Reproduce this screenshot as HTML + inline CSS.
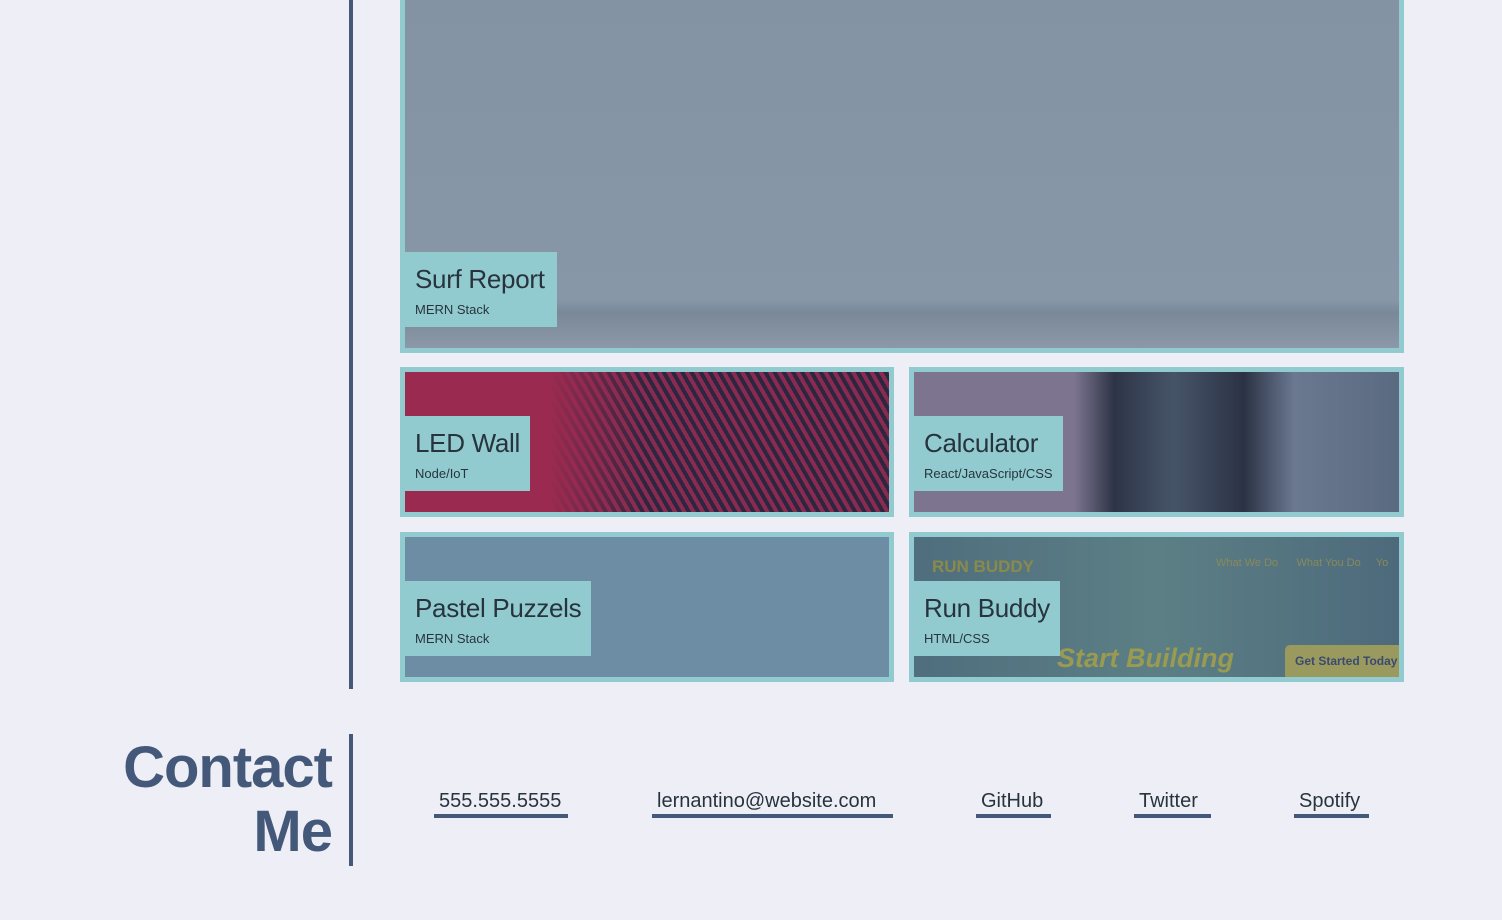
<!DOCTYPE html>
<html><head><style>
*{margin:0;padding:0;box-sizing:border-box}
body{width:1502px;height:920px;background:#eeeff6;font-family:"Liberation Sans",sans-serif;position:relative;overflow:hidden}
.vl{position:absolute;left:349px;width:4px;background:#44587a}
.card{position:absolute;border:5px solid #92cbcf;overflow:hidden}
.lab{position:absolute;left:0;background:#92cbcf;padding:10px 10px 0 10px;height:75px;color:#27343d}
.lab h3{font-size:26px;font-weight:normal;letter-spacing:-0.3px;line-height:34px}
.lab p{font-size:13px;margin-top:6px}
.ct{position:absolute;right:1170px;top:736px;text-align:right;color:#44587a;font-size:58px;font-weight:bold;line-height:64px;letter-spacing:-1px}
.lk{position:absolute;top:790px;font-size:20px;color:#27343d;border-bottom:4px solid #44587a;padding:0 5px 2px;height:28px;white-space:nowrap}
</style></head><body>
<div class="vl" style="top:0;height:689px"></div>
<div class="vl" style="top:734px;height:132px"></div>

<div class="card" style="left:400px;top:-10px;width:1004px;height:363px;background:linear-gradient(#8393a3 0,#8797a8 305px,#7a8898 318px,#8d9aaa 357px)">
<div class="lab" style="top:257px;padding-right:12px"><h3>Surf Report</h3><p>MERN Stack</p></div></div>

<div class="card" style="left:400px;top:367px;width:494px;height:150px;background:repeating-linear-gradient(60deg,#8a2a50 0,#8a2a50 4px,#2d2640 4px,#2d2640 8px)">
<div style="position:absolute;left:0;top:0;width:240px;height:140px;background:linear-gradient(90deg,#9a2a50 60%,rgba(154,42,80,0))"></div>
<div class="lab" style="top:44px"><h3>LED Wall</h3><p>Node/IoT</p></div></div>

<div class="card" style="left:909px;top:367px;width:495px;height:150px;background:linear-gradient(90deg,#7d7590 0,#7d7590 160px,#2e3448 200px,#465468 260px,#2c3245 330px,#6a7890 380px,#5a6a80)">
<div class="lab" style="top:44px"><h3>Calculator</h3><p>React/JavaScript/CSS</p></div></div>

<div class="card" style="left:400px;top:532px;width:494px;height:150px;background:#6d8da5">
<div class="lab" style="top:44px"><h3>Pastel Puzzels</h3><p>MERN Stack</p></div></div>

<div class="card" style="left:909px;top:532px;width:495px;height:150px;background:linear-gradient(90deg,#4f6e7e,#5c7f85 50%,#4d6a7c)">
<div style="position:absolute;left:18px;top:20px;color:#8a8a4a;font-weight:bold;font-size:17px">RUN BUDDY</div>
<div style="position:absolute;left:302px;top:20px;color:#8a8a5a;font-size:11px;white-space:nowrap">What We Do &nbsp;&nbsp;&nbsp;&nbsp; What You Do &nbsp;&nbsp;&nbsp; Yo</div>
<div style="position:absolute;left:143px;top:106px;color:#9a9a50;font-weight:bold;font-style:italic;font-size:27px">Start Building</div>
<div style="position:absolute;left:371px;top:108px;width:130px;height:40px;background:#9a9a5e;border-radius:5px;color:#3a4a70;font-weight:bold;font-size:12px;padding:9px 10px">Get Started Today</div>
<div class="lab" style="top:44px"><h3>Run Buddy</h3><p>HTML/CSS</p></div></div>

<div class="ct">Contact<br>Me</div>
<div class="lk" style="left:434px;width:134px">555.555.5555</div>
<div class="lk" style="left:652px;width:241px">lernantino@website.com</div>
<div class="lk" style="left:976px;width:75px">GitHub</div>
<div class="lk" style="left:1134px;width:77px">Twitter</div>
<div class="lk" style="left:1294px;width:75px">Spotify</div>
</body></html>
